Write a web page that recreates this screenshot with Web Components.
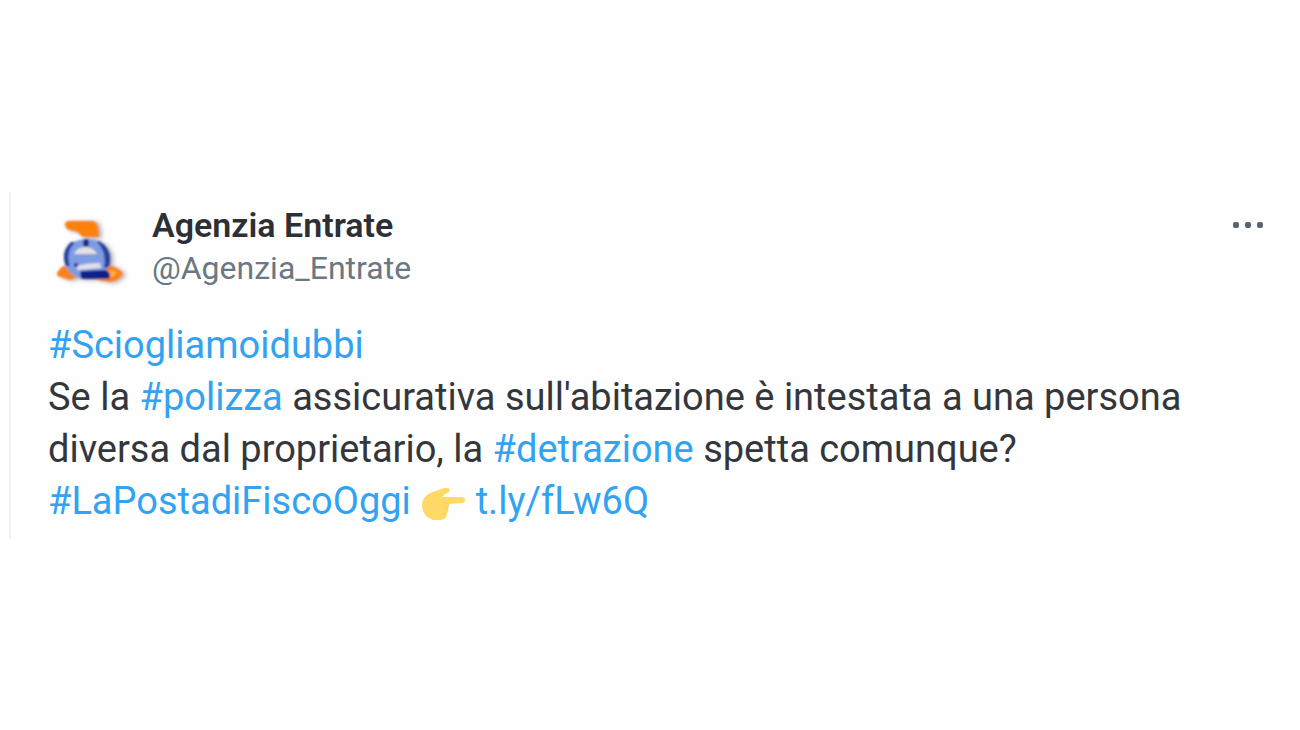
<!DOCTYPE html>
<html lang="it">
<head>
<meta charset="utf-8">
<meta name="viewport" content="width=device-width, initial-scale=1">
<title>Agenzia Entrate</title>
<style>
body { margin: 0; background: #fefefe; font-family: Roboto, "Liberation Sans", sans-serif; color: #33373b; }
</style>
</head>
<body>
<tweet-page>
  <tweet-card>
    <tweet-author slot="header" name="Agenzia Entrate" handle="@Agenzia_Entrate"></tweet-author>
    <tweet-menu slot="menu"></tweet-menu>
    <tweet-tag>#Sciogliamoidubbi</tweet-tag><br><span>Se la</span> <tweet-tag>#polizza</tweet-tag> <span>assicurativa sull'abitazione è intestata a una persona</span> <span>diversa dal proprietario, la</span> <tweet-tag>#detrazione</tweet-tag> <span>spetta comunque?</span><br><tweet-tag>#LaPostadiFiscoOggi</tweet-tag> <pointing-hand></pointing-hand> <tweet-tag>t.ly/fLw6Q</tweet-tag>
  </tweet-card>
</tweet-page>
<script>
function define(name, html, setup) {
  const template = document.createElement('template');
  template.innerHTML = html;
  customElements.define(name, class extends HTMLElement {
    constructor() {
      super();
      this.attachShadow({ mode: 'open' }).append(template.content.cloneNode(true));
    }
    connectedCallback() { if (setup) setup(this, this.shadowRoot); }
  });
}

define('tweet-page', `
  <style>
    :host { display: flex; flex-direction: column; justify-content: center; min-height: 100vh; padding: 0 32px 0 9px; box-sizing: border-box; }
  </style>
  <slot></slot>`);

define('tweet-card', `
  <style>
    :host { display: block; border-left: 2px solid #eff3f4; padding: 12px 0 12px 37px; }
    header { display: flex; justify-content: space-between; align-items: flex-start; margin-bottom: 29px; }
    p { margin: 0; max-width: 1160px; font-size: 38px; line-height: 52px; }
  </style>
  <article>
    <header><slot name="header"></slot><slot name="menu"></slot></header>
    <p><slot></slot></p>
  </article>`);

define('tweet-author', `
  <style>
    :host { display: flex; align-items: center; gap: 20px; }
    .names { display: grid; line-height: 43px; }
    .name { font-size: 34px; font-weight: 600; color: #2c3034; }
    .handle { font-size: 32px; color: #6a7883; }
  </style>
  <tweet-avatar></tweet-avatar>
  <div class="names"><span class="name"></span><span class="handle"></span></div>`,
  (host, root) => {
    root.querySelector('.name').textContent = host.getAttribute('name');
    root.querySelector('.handle').textContent = host.getAttribute('handle');
  });

define('tweet-avatar', `
  <style>
    :host { display: block; width: 84px; height: 84px; }
    svg { display: block; }
  </style>
  <svg width="84" height="84" viewBox="0 0 84 84" role="img" aria-label="Logo">
    <defs>
      <filter id="shade" x="-30%" y="-30%" width="160%" height="160%"><feDropShadow dx="3" dy="1" stdDeviation="2" flood-color="#77777f" flood-opacity=".6"/></filter>
      <filter id="soft"><feGaussianBlur stdDeviation="1"/></filter>
    </defs>
    <g filter="url(#shade)"><g filter="url(#soft)">
      <path d="M17 20Q16 16 22 16H44Q49 16 50 23L51 32H36Q32 31 30 27L21 25Q18 24 17 20Z" fill="#fc8208"/>
      <path d="M15 61Q11 64 9 68Q8 71 13 72L22 75L32 71L30 64Z" fill="#f98317"/>
      <path d="M50 62L64 61Q72 64 75 69Q70 76 62 77L50 75Z" fill="#fc8208"/>
      <ellipse cx="39" cy="54" rx="23" ry="20" fill="#7f9ce3"/>
      <path d="M18 61Q12 47 23 37L27 37Q17 48 22 61Z M51 36Q66 45 61 62L56 63Q59 47 49 37Z" fill="#28409c"/>
      <path d="M26 49Q29 42 38 42Q46 43 49 49Z" fill="#e4e2e2"/>
      <path d="M28 62Q35 58 52 58L53 63L30 65Z" fill="#dfe1e8"/>
      <ellipse cx="38" cy="38" rx="3" ry="4" fill="#172b85"/><circle cx="28" cy="60" r="2" fill="#172b85"/>
      <path d="M33 66L58 65Q64 68 61 74H34Q31 70 33 66Z" fill="#102386"/>
      <path d="M61 66Q66 64 69 68L63 73Z" fill="#ffac4d"/>
    </g></g>
  </svg>`);

define('tweet-menu', `
  <style>
    :host { display: block; }
    button { display: block; border: 0; padding: 0; background: none; height: 43px; cursor: pointer; }
    svg { display: block; }
  </style>
  <button type="button" aria-label="Altro"><svg width="36" height="12" viewBox="0 0 36 12" fill="#58656f"><rect x="1" y="3" width="6" height="6" rx="2"/><rect x="13" y="3" width="6" height="6" rx="2"/><rect x="25" y="3" width="6" height="6" rx="2"/></svg></button>`);

define('tweet-tag', `
  <style>
    :host { display: inline; }
    a { color: #31a3f2; text-decoration: none; }
  </style>
  <a href="#"><slot></slot></a>`);

define('pointing-hand', `
  <style>
    :host { display: inline-block; width: 46px; height: 36px; vertical-align: -8px; }
    svg { display: block; }
  </style>
  <svg width="46" height="36" viewBox="0 0 46 36" role="img" aria-label="Indice verso destra">
    <path d="M2 18Q3 11 10 7L24 2Q29 1 30 4Q30 6 25 8L22 11H42Q45 11 45 14Q45 17 42 17L29 18Q30 20 28 22Q29 25 27 27Q27 34 20 34L13 34Q2 31 2 18Z" fill="#ffd965"/>
    <path d="M24 17L29 18M24 22L28 22M23 28L27 27" fill="none" stroke="#fbd05a" stroke-width="1"/>
  </svg>`);
</script>
</body>
</html>
